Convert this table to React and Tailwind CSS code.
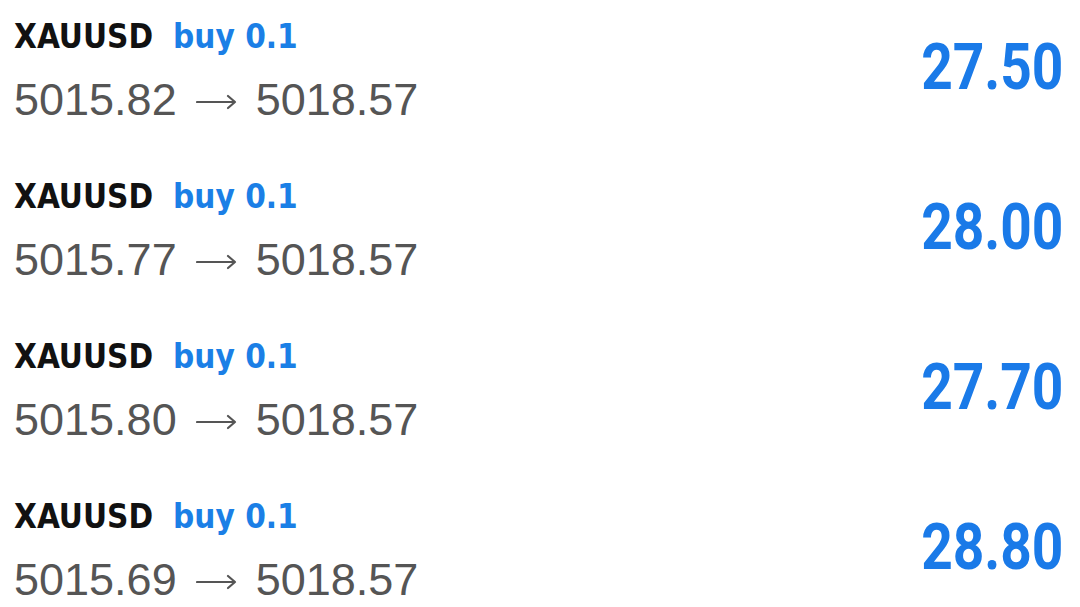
const trades = [
  { open: '5015.82', close: '5018.57', profit: '27.50' },
  { open: '5015.77', close: '5018.57', profit: '28.00' },
  { open: '5015.80', close: '5018.57', profit: '27.70' },
  { open: '5015.69', close: '5018.57', profit: '28.80' },
];

function Arrow() {
  return (
    <svg width="41" height="16" viewBox="0 0 41 16" className="inline-block mx-[19px] align-middle -mt-[2px]">
      <path d="M1 8h38M32 2l7 6-7 6" fill="none" stroke="#555" strokeWidth="2.2" strokeLinecap="round" strokeLinejoin="round" />
    </svg>
  );
}

export default function App() {
  return (
    <div className="w-[1080px] h-[607px] overflow-hidden bg-white">
      <div className="-mt-[12px]">
        {trades.map((t, i) => (
          <div key={i} className="h-[160px] flex items-center justify-between pl-[14px] pr-[17px]">
            <div className="pt-[7px]">
              <div className="text-[33px] leading-[44px] font-bold [font-family:'DejaVu_Sans_Condensed','DejaVu_Sans',sans-serif] [font-stretch:condensed] text-[#111]">
                XAUUSD<span className="ml-[20px] text-[#1b7fe6]">buy 0.1</span>
              </div>
              <div className="mt-[13px] text-[45px] leading-[56px] text-[#555] [font-family:'Liberation_Sans',Arial,sans-serif] whitespace-nowrap">
                {t.open}<Arrow />{t.close}
              </div>
            </div>
            <div className="text-[64px] leading-none font-bold text-[#1a7ae8] [font-family:Roboto,sans-serif] scale-x-[0.86] origin-right">
              {t.profit}
            </div>
          </div>
        ))}
      </div>
    </div>
  );
}
